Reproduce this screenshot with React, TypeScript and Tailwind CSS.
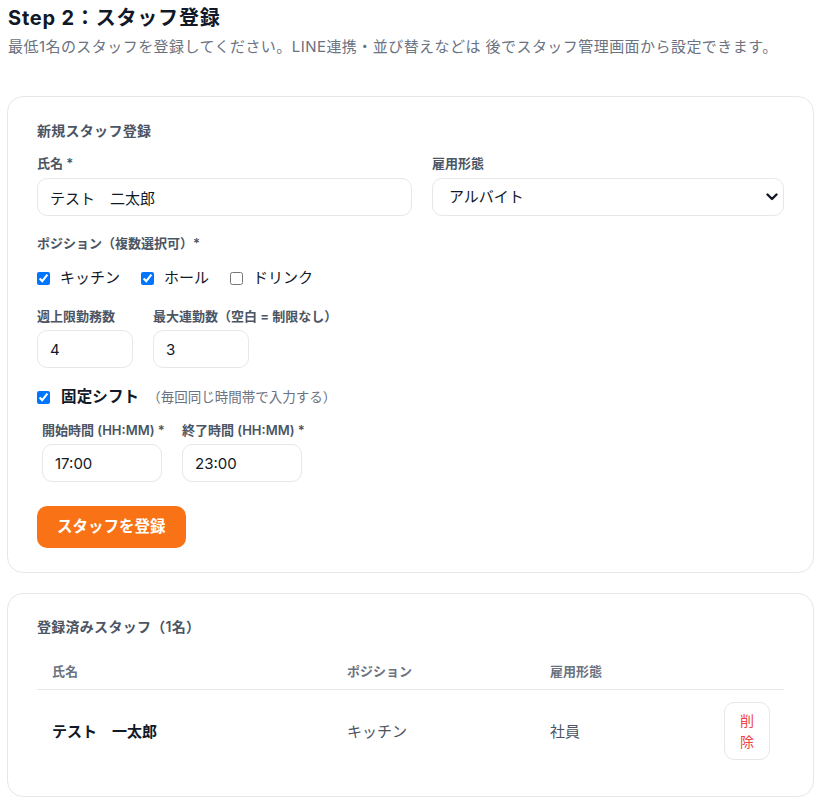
import React from "react";

const font = { fontFamily: 'Inter, "Noto Sans CJK JP", sans-serif' };

function Label({ children, className = "" }: { children: React.ReactNode; className?: string }) {
  return (
    <div className={"whitespace-nowrap text-[13px] leading-[18px] font-semibold text-[#4b5563] " + className}>{children}</div>
  );
}

export default function App() {
  return (
    <div className="bg-white min-h-[801px] pl-[7px] pr-[8px] pt-1 text-[#111827]" style={font}>
      <h1 className="text-[20px] leading-[28px] font-bold tracking-[0.04em] pl-[1px]">Step 2：スタッフ登録</h1>
      <p className="mt-[5px] pl-[1px] text-[15px] leading-[20px] tracking-[0.03em] text-[#6b7280]">
        最低1名のスタッフを登録してください。LINE連携・並び替えなどは 後でスタッフ管理画面から設定できます。
      </p>

      <div className="mt-[39px] rounded-[16px] border border-[#e5e7eb] bg-white px-[29px] pt-[24px] pb-[24px]">
        <div className="text-[14px] leading-[20px] font-semibold tracking-[0.02em] text-[#4b5563]">新規スタッフ登録</div>

        <div className="mt-[13px] grid grid-cols-[375px_1fr] gap-x-5">
          <div>
            <Label>氏名 *</Label>
            <input
              className="mt-[6px] h-[38px] w-full rounded-[10px] border border-[#e5e7eb] px-3 text-[15px] outline-none"
              defaultValue="テスト　二太郎"
            />
          </div>
          <div>
            <Label>雇用形態</Label>
            <div className="relative mt-[6px]">
              <select
                className="h-[38px] w-full appearance-none rounded-[10px] border border-[#e5e7eb] bg-white pl-[16px] pr-8 text-[15px] text-[#111827] outline-none"
                defaultValue="アルバイト"
              >
                <option>社員</option>
                <option>アルバイト</option>
              </select>
              <svg
                className="pointer-events-none absolute right-[6px] top-[15px]"
                width="12"
                height="8"
                viewBox="0 0 12 8"
                fill="none"
              >
                <path d="M1.5 1.5 L6 6 L10.5 1.5" stroke="#111827" strokeWidth="2.4" strokeLinecap="round" strokeLinejoin="round" />
              </svg>
            </div>
          </div>
        </div>

        <Label className="mt-[18px]">ポジション（複数選択可）*</Label>
        <div className="mt-[15px] flex items-center gap-[21px] text-[15px] leading-[22px]">
          <label className="flex items-center gap-[10px]">
            <input type="checkbox" defaultChecked className="h-[13px] w-[13px]" />
            <span>キッチン</span>
          </label>
          <label className="flex items-center gap-[10px]">
            <input type="checkbox" defaultChecked className="h-[13px] w-[13px]" />
            <span>ホール</span>
          </label>
          <label className="flex items-center gap-[10px]">
            <input type="checkbox" className="h-[13px] w-[13px]" />
            <span>ドリンク</span>
          </label>
        </div>

        <div className="mt-[18px] flex gap-5">
          <div className="w-[96px]">
            <Label>週上限勤務数</Label>
            <input
              className="mt-[5px] h-[38px] w-[96px] rounded-[10px] border border-[#e5e7eb] px-3 text-[15px] outline-none"
              defaultValue="4"
            />
          </div>
          <div>
            <Label>最大連勤数（空白 = 制限なし）</Label>
            <input
              className="mt-[5px] h-[38px] w-[96px] rounded-[10px] border border-[#e5e7eb] px-3 text-[15px] outline-none"
              defaultValue="3"
            />
          </div>
        </div>

        <label className="mt-[18px] flex items-center leading-[22px]">
          <input type="checkbox" defaultChecked className="h-[13px] w-[13px]" />
          <span className="ml-[11px] text-[15.5px] font-bold tracking-[0.01em]">固定シフト</span>
          <span className="ml-[8px] text-[13.5px] text-[#6b7280]">（毎回同じ時間帯で入力する）</span>
        </label>

        <div className="mt-[13px] ml-[5px] flex gap-5">
          <div className="w-[120px]">
            <Label>開始時間 (HH:MM) *</Label>
            <input
              className="mt-[5px] h-[38px] w-[120px] rounded-[10px] border border-[#e5e7eb] px-3 text-[15px] outline-none"
              defaultValue="17:00"
            />
          </div>
          <div className="w-[120px]">
            <Label>終了時間 (HH:MM) *</Label>
            <input
              className="mt-[5px] h-[38px] w-[120px] rounded-[10px] border border-[#e5e7eb] px-3 text-[15px] outline-none"
              defaultValue="23:00"
            />
          </div>
        </div>

        <button className="mt-[24px] h-[42px] rounded-[10px] bg-[#f97316] px-[20px] text-[15.5px] font-bold text-white">
          スタッフを登録
        </button>
      </div>

      <div className="mt-[20px] rounded-[16px] border border-[#e5e7eb] bg-white px-[29px] pt-[23px] pb-[24px]">
        <div className="text-[14px] leading-[20px] font-semibold tracking-[0.02em] text-[#4b5563]">登録済みスタッフ（1名）</div>
        <table className="mt-[16px] w-full table-fixed border-collapse">
          <colgroup>
            <col className="w-[295px]" />
            <col className="w-[203px]" />
            <col />
            <col className="w-[80px]" />
          </colgroup>
          <thead>
            <tr className="border-b border-[#e5e7eb]">
              <th className="px-[15px] py-[9px] text-left text-[13px] leading-[18px] font-semibold text-[#6b7280]">氏名</th>
              <th className="px-[15px] py-[9px] text-left text-[13px] leading-[18px] font-semibold text-[#6b7280]">ポジション</th>
              <th className="px-[15px] py-[9px] text-left text-[13px] leading-[18px] font-semibold text-[#6b7280]">雇用形態</th>
              <th className="px-[15px] py-[9px]"></th>
            </tr>
          </thead>
          <tbody>
            <tr>
              <td className="px-[15px] pt-[15px] pb-3 text-[15px] font-bold text-[#111827]">テスト　一太郎</td>
              <td className="px-[15px] pt-[15px] pb-3 text-[15px] text-[#4b5563]">キッチン</td>
              <td className="px-[15px] pt-[15px] pb-3 text-[15px] text-[#4b5563]">社員</td>
              <td className="py-3 pr-[14px] text-right">
                <button className="w-[46px] rounded-[10px] border border-[#e5e7eb] bg-white px-[15px] py-[7px] text-[14px] leading-[21px] text-[#ef4444]">
                  削除
                </button>
              </td>
            </tr>
          </tbody>
        </table>
      </div>
    </div>
  );
}
